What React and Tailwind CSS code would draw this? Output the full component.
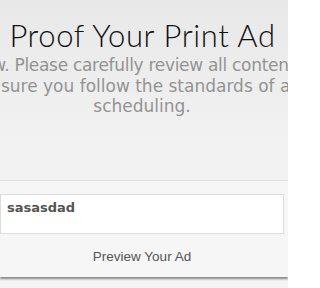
const lines = [
  { text: 'your preview. Please carefully review all content and', pad: 'pr-[58px] tracking-[-0.3px]' },
  { text: 'make sure you follow the standards of ad', pad: 'pr-[38px]' },
  { text: 'scheduling.', pad: 'pr-[4px]' },
];

const App = () => (
  <div className="w-[288px] h-[288px] overflow-hidden bg-gradient-to-b from-[#e8e8e8] via-[#f2f2f2] to-[#f4f4f4]">
    <h1 className="pt-[17px] pr-[3px] text-center text-[31px] leading-[36px] font-light tracking-[0.6px] text-[#111] font-['Lato',sans-serif]">
      Proof Your Print Ad
    </h1>
    <div className="mt-[2px] flex flex-col items-center overflow-hidden text-[17px] leading-[20.5px] text-[#939393] font-['DejaVu_Sans',sans-serif]">
      {lines.map((line) => (
        <div key={line.text} className={`whitespace-nowrap ${line.pad}`}>{line.text}</div>
      ))}
    </div>
    <div className="mt-[63px] border-t border-[#dedede] bg-[#f6f6f6] shadow-[0_2px_2px_rgba(0,0,0,0.45)] pt-[13px] pb-[10px]">
      <div className="mr-[4px] h-[40px] bg-white border border-[#dcdcdc] px-[6px] pt-[3px] text-[13px] font-bold text-[#555] font-['DejaVu_Sans',sans-serif]">
        sasasdad
      </div>
      <div className="mt-[13px] pr-[4px] text-center text-[13.5px] text-[#555] font-['Liberation_Sans',sans-serif]">
        Preview Your Ad
      </div>
    </div>
  </div>
);

export default App;
